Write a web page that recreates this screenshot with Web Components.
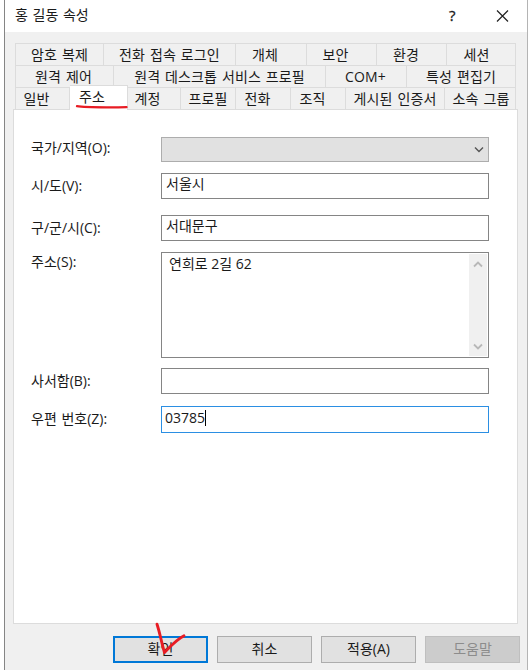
<!DOCTYPE html>
<html lang="ko">
<head>
<meta charset="utf-8">
<title>홍 길동 속성</title>
<style>
  body {
    margin: 0;
    background: #fff;
    color: #1a1a1a;
    font: 14px/20px "Open Sans", "Noto Sans CJK KR", sans-serif;
    word-spacing: 1px;
    overflow: hidden;
  }
</style>
</head>
<body>
<property-dialog caption="홍 길동 속성">
  <tab-row slot="tabs">
    <tab-item style="--w: 88px">암호 복제</tab-item>
    <tab-item style="--w: 132px">전화 접속 로그인</tab-item>
    <tab-item style="--w: 71px; --dx: -12px">개체</tab-item>
    <tab-item style="--w: 70px; --dx: -12px">보안</tab-item>
    <tab-item style="--w: 70px; --dx: -11px">환경</tab-item>
    <tab-item style="--w: 69px; --dx: -9px">세션</tab-item>
  </tab-row>
  <tab-row slot="tabs">
    <tab-item style="--w: 98px; --dx: -2px">원격 제어</tab-item>
    <tab-item style="--w: 212px">원격 데스크톱 서비스 프로필</tab-item>
    <tab-item style="--w: 81px; --dx: -1px">COM+</tab-item>
    <tab-item style="--w: 109px">특성 편집기</tab-item>
  </tab-row>
  <tab-row slot="tabs">
    <tab-item style="--w: 54px; --dx: -12px">일반</tab-item>
    <tab-item style="--w: 58px; --dx: -13px" selected>주소</tab-item>
    <tab-item style="--w: 53px; --dx: -13px">계정</tab-item>
    <tab-item style="--w: 55px">프로필</tab-item>
    <tab-item style="--w: 55px; --dx: -11px">전화</tab-item>
    <tab-item style="--w: 55px; --dx: -11px">조직</tab-item>
    <tab-item style="--w: 99px">게시된 인증서</tab-item>
    <tab-item style="--w: 71px; --dx: 2px">소속 그룹</tab-item>
  </tab-row>

  <form-field label="국가/지역(O):" kind="combo" style="--h: 25px; --label-y: 1px"></form-field>
  <form-field label="시/도(V):" style="--gap: 11px">서울시</form-field>
  <form-field label="구/군/시(C):" style="--gap: 16px">서대문구</form-field>
  <form-field label="주소(S):" kind="multiline" style="--h: 106px; --gap: 11px; --label-y: 0px">연희로 2길 62</form-field>
  <form-field label="사서함(B):" style="--gap: 10px"></form-field>
  <form-field label="우편 번호(Z):" kind="focused" style="--h: 27px; --gap: 12px">03785</form-field>

  <push-button slot="buttons" default>확인</push-button>
  <push-button slot="buttons">취소</push-button>
  <push-button slot="buttons">적용(A)</push-button>
  <push-button slot="buttons" disabled>도움말</push-button>
</property-dialog>

<script>
class PropertyDialog extends HTMLElement {
  constructor() {
    super();
    this.attachShadow({ mode: 'open' });
  }

  connectedCallback() {
    this.shadowRoot.innerHTML = `
    <style>
    * {
      box-sizing: border-box;
    }
    :host {
      display: flex;
      flex-direction: column;
      box-sizing: border-box;
      position: relative;
      width: 524px;
      height: 670px;
      margin-left: 4px;
      border-left: 1px solid #858585;
      border-right: 1px solid #b4b4b4;
      background: #f0f0f0;
    }
    header {
      display: flex;
      align-items: center;
      height: 32px;
      padding: 0 18px 2px 10px;
      background: #fff;
    }
    h1 {
      flex: 1;
      margin: 0;
      font: inherit;
    }
    .help {
      width: 8px;
      margin-right: 39px;
      font-size: 15px;
      -webkit-text-stroke: 0.3px;
    }
    .tabs {
      padding: 11px 0 0 10px;
    }
    .page {
      width: 505px;
      height: 515px;
      margin-left: 8px;
      padding: 27px 0 0 17px;
      border: 1px solid #dcdcdc;
      background: #fff;
    }
    footer {
      display: flex;
      gap: 9px;
      padding: 12px 0 0 108px;
    }
    .ink {
      position: absolute;
      left: -5px;
      top: 0;
      z-index: 2;
      fill: none;
      stroke: #e81c24;
      stroke-linecap: round;
      stroke-linejoin: round;
      pointer-events: none;
    }
    </style>

    <header>
      <h1>${this.getAttribute('caption')}</h1>
      <span class="help">?</span>
      <svg width="13" height="13" viewBox="0 0 13 13"><path d="M1 1.5l11 11M12 1.5l-11 11" stroke="#222" stroke-width="1.2"/></svg>
    </header>
    <div class="tabs"><slot name="tabs"></slot></div>
    <div class="page"><slot></slot></div>
    <footer><slot name="buttons"></slot></footer>
    <svg class="ink" width="528" height="670" viewBox="0 0 528 670">
      <path d="M77 106.2C86 107.8 103 107.4 126.5 107.2" stroke-width="2.3"/>
      <path d="M157 624.2C160 633 161.5 643 164.5 652.5C170 647 176 640 184 635.8" stroke-width="2.9"/>
    </svg>
    `;
  }
}

class TabRow extends HTMLElement {
  constructor() {
    super();
    this.attachShadow({ mode: 'open' }).innerHTML = `
    <style>
    :host {
      display: flex;
      box-sizing: border-box;
      width: 501px;
      height: 22px;
      border-left: 1px solid #dcdcdc;
    }
    </style>
    <slot></slot>
    `;
  }
}

class TabItem extends HTMLElement {
  constructor() {
    super();
    this.attachShadow({ mode: 'open' }).innerHTML = `
    <style>
    :host {
      display: flex;
      justify-content: center;
      box-sizing: border-box;
      width: var(--w);
      height: 22px;
      border-top: 1px solid #dcdcdc;
      border-right: 1px solid #dcdcdc;
      line-height: 22px;
      letter-spacing: 0.15px;
      white-space: nowrap;
    }
    :host([selected]) {
      height: 25px;
      margin-top: -2px;
      background: #fff;
      z-index: 1;
    }
    span {
      margin-left: var(--dx, 0);
    }
    </style>
    <span><slot></slot></span>
    `;
  }
}

class FormField extends HTMLElement {
  constructor() {
    super();
    this.attachShadow({ mode: 'open' });
  }

  connectedCallback() {
    const kind = this.getAttribute('kind') || 'text';
    this.shadowRoot.innerHTML = `
    <style>
    :host {
      display: flex;
      margin-top: var(--gap, 0);
    }
    label {
      width: 130px;
      padding-top: var(--label-y, 3px);
      white-space: nowrap;
    }
    .box {
      display: flex;
      justify-content: space-between;
      box-sizing: border-box;
      width: 328px;
      height: var(--h, 26px);
      padding-left: 4px;
      border: 1px solid #858585;
      background: #fff;
    }
    .value {
      display: flex;
      align-items: center;
      height: 20px;
      word-spacing: 0;
    }
    .combo {
      align-items: center;
      padding-right: 4px;
      border-color: #adadad;
      background: #e1e1e1;
    }
    .focused {
      padding-left: 3px;
      border-color: #2b8fe3;
    }
    .focused .value {
      height: 22px;
    }
    .multiline {
      padding: 1px 1px 1px 7px;
    }
    .caret {
      width: 1px;
      height: 16px;
      background: #000;
    }
    .scroll {
      display: flex;
      flex-direction: column;
      justify-content: space-between;
      align-items: center;
      box-sizing: border-box;
      width: 18px;
      padding: 7px 0 6px;
      background: #f0f0f0;
    }
    svg {
      fill: none;
      stroke: #b8b8b8;
      stroke-width: 1.8;
    }
    .combo svg {
      stroke: #555;
      stroke-width: 1.4;
    }
    </style>

    <label>${this.getAttribute('label')}</label>
    <div class="box ${kind}">
      <span class="value"><slot></slot>${kind === 'focused' ? '<i class="caret"></i>' : ''}</span>
      ${this.renderArrows(kind)}
    </div>
    `;
  }

  renderArrows(kind) {
    const down = '<svg width="10" height="7" viewBox="0 0 10 7"><path d="M1 1.5l4 4 4-4"/></svg>';
    const up = '<svg width="10" height="7" viewBox="0 0 10 7"><path d="M1 5.5l4-4 4 4"/></svg>';
    if (kind === 'combo') return down;
    if (kind === 'multiline') return `<div class="scroll">${up}${down}</div>`;
    return '';
  }
}

class PushButton extends HTMLElement {
  constructor() {
    super();
    this.attachShadow({ mode: 'open' }).innerHTML = `
    <style>
    :host {
      display: flex;
      justify-content: center;
      align-items: center;
      box-sizing: border-box;
      width: 95px;
      height: 27px;
      padding-bottom: 2px;
      border: 1px solid #adadad;
      background: #e1e1e1;
    }
    :host([default]) {
      border: 2px solid #0078d7;
    }
    :host([disabled]) {
      border-color: #bfbfbf;
      background: #ccc;
      color: #8c8c8c;
    }
    </style>
    <slot></slot>
    `;
  }
}

customElements.define('property-dialog', PropertyDialog);
customElements.define('tab-row', TabRow);
customElements.define('tab-item', TabItem);
customElements.define('form-field', FormField);
customElements.define('push-button', PushButton);
</script>
</body>
</html>
